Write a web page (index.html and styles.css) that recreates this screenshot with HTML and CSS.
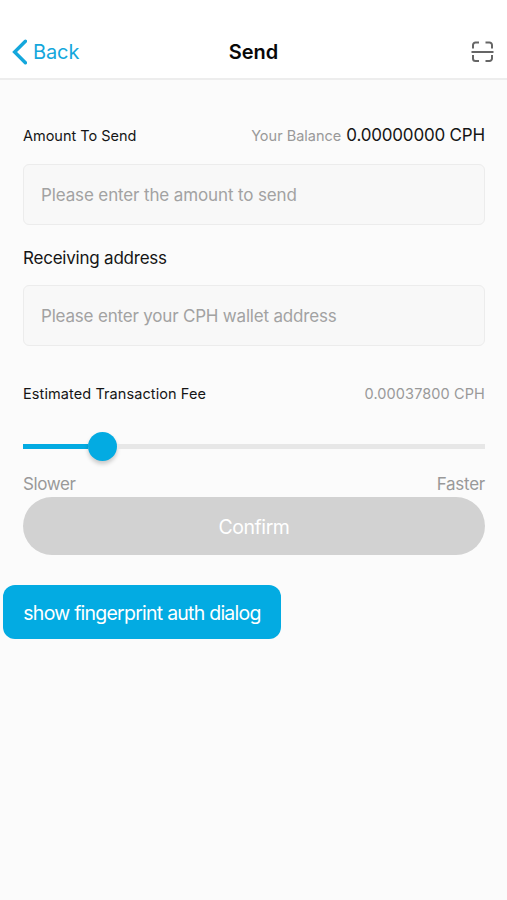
FILE: index.html
```html
<!DOCTYPE html>
<html lang="en">
<head>
<meta charset="utf-8">
<title>Send</title>
<link rel="stylesheet" href="styles.css">
</head>
<body>
<header class="nav">
  <a class="back"><svg class="chevron" width="15" height="26" viewBox="0 0 15 26"><path d="M13.400 2.200 2.600 13l10.800 10.800" fill="none" stroke="currentColor" stroke-width="3.400" stroke-linecap="round" stroke-linejoin="miter"/></svg><span class="back-label">Back</span></a>
  <h1 class="title"><span>Send</span></h1>
  <svg class="scan" width="23" height="22" viewBox="0 0 23 22" fill="none" stroke="#666" stroke-width="2"><path d="M2 7.500V4a2.500 2.500 0 0 1 2.500-2.500H8M14.500 1.500H18.500A2.500 2.500 0 0 1 21 4v3.500M2 14v3.500A2.500 2.500 0 0 0 4.500 20H8M14.500 20H18.500A2.500 2.500 0 0 0 21 17.500V14M.5 11h22"/></svg>
</header>
<main class="form">
  <div class="row amount-row">
    <span class="label amount">Amount To Send</span>
    <div class="balance"><span class="balance-label">Your Balance</span><span class="balance-value">0.00000000 CPH</span></div>
  </div>
  <div class="field"><span class="ph-amount">Please enter the amount to send</span></div>
  <div class="row address-row"><span class="address">Receiving address</span></div>
  <div class="field"><span class="ph-address">Please enter your CPH wallet address</span></div>
  <div class="row fee-row">
    <span class="label fee">Estimated Transaction Fee</span>
    <span class="fee-value">0.00037800 CPH</span>
  </div>
  <div class="slider"><div class="done"></div><div class="thumb"></div><div class="rest"></div></div>
  <div class="row speed-row"><span class="slower">Slower</span><span class="faster">Faster</span></div>
  <div class="confirm"><span class="confirm-label">Confirm</span></div>
</main>
<div class="auth"><span class="auth-label">show fingerprint auth dialog</span></div>
</body>
</html>
```
FILE: styles.css
```css
* { box-sizing: border-box; }
body {
  margin: 0;
  min-height: 900px;
  background: #fbfbfb;
  color: #151515;
  font-family: Inter, "Liberation Sans", sans-serif;
  font-size: 16px;
  line-height: 24px;
  white-space: nowrap;
}
.nav {
  display: grid;
  grid-template-columns: 1fr auto 1fr;
  align-items: center;
  height: 80px;
  padding: 26px 13px 0 12px;
  background: #fff;
  border-bottom: 2px solid #ededed;
}
.back { display: flex; align-items: center; gap: 6px; color: #14a7dc; font-size: 20px; letter-spacing: -.1px; }
.title { margin: 0; padding-left: 1px; font-size: 20px; font-weight: 600; color: #080808; }
.scan { justify-self: end; }
.form { padding: 0 22px 0 23px; }
.row { display: flex; align-items: center; justify-content: space-between; }
.amount-row { height: 84px; padding-top: 27px; }
.label { font-size: 14.500px; }
.amount { letter-spacing: -.02px; }
.fee { letter-spacing: .09px; }
.balance { display: flex; align-items: baseline; gap: 5px; }
.balance-label { font-size: 14.500px; color: #999; }
.balance-value { font-size: 17px; letter-spacing: -.18px; }
.field {
  display: flex;
  align-items: center;
  height: 61px;
  padding-left: 17px;
  border: 1.500px solid #ececec;
  border-radius: 6px;
  background: #f8f8f8;
  color: #a2a2a2;
  font-size: 17px;
}
.ph-amount { letter-spacing: -.13px; }
.ph-address { letter-spacing: -.19px; }
.address-row { height: 60px; padding-top: 6px; font-size: 17px; letter-spacing: -.22px; }
.fee-row { height: 72px; padding-top: 24px; }
.fee-value { font-size: 14.500px; letter-spacing: .11px; color: #999; }
.slider { display: flex; align-items: center; height: 56px; }
.done { width: 65px; height: 5px; background: #03abe2; }
.thumb { width: 29px; height: 29px; border-radius: 50%; background: #03abe2; box-shadow: 0 3px 4px #0003; }
.rest { flex: 1; height: 5px; background: #e7e7e7; }
.speed-row { height: 23px; padding-bottom: 4px; font-size: 17px; color: #999; }
.slower { letter-spacing: -.4px; }
.faster { letter-spacing: -.25px; }
.confirm {
  display: flex;
  align-items: center;
  justify-content: center;
  height: 58px;
  padding-top: 1px;
  border-radius: 29px;
  background: #d2d2d2;
  color: #fff;
  font-size: 19.500px;
  letter-spacing: -.45px;
}
.auth {
  display: flex;
  align-items: center;
  justify-content: center;
  width: 278px;
  height: 54px;
  margin: 30px 0 0 3px;
  padding-top: 1px;
  border-radius: 12px;
  background: #03abe2;
  color: #fff;
  font-size: 19.500px;
  letter-spacing: -.76px;
}
```
